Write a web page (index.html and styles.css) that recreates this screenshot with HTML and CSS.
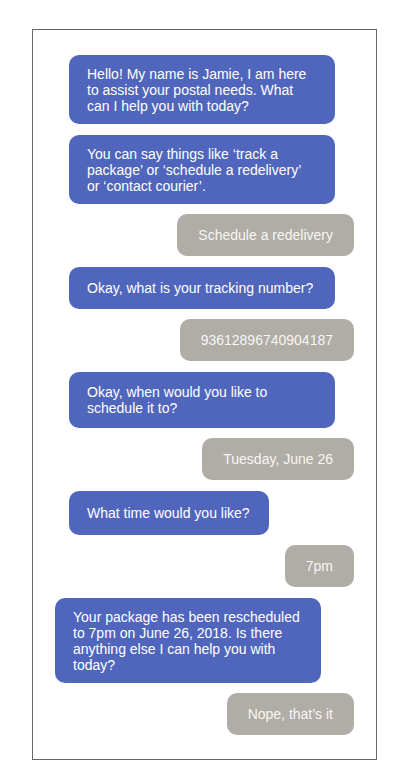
FILE: index.html
```html
<!DOCTYPE html>
<html lang="en">
<head>
<meta charset="utf-8">
<title>Chat</title>
<link rel="stylesheet" href="styles.css">
</head>
<body>
<main class="chat">
  <div class="msg bot multi">Hello! My name is Jamie, I am here to assist your postal needs. What can I help you with today?</div>
  <div class="msg bot multi">You can say things like ‘track a package’ or ‘schedule a redelivery’ or ‘contact courier’.</div>
  <div class="msg me">Schedule a redelivery</div>
  <div class="msg bot">Okay, what is your tracking number?</div>
  <div class="msg me">93612896740904187</div>
  <div class="msg bot two">Okay, when would you like to schedule it to?</div>
  <div class="msg me">Tuesday, June 26</div>
  <div class="msg bot fit tall">What time would you like?</div>
  <div class="msg me">7pm</div>
  <div class="msg bot multi flush">Your package has been rescheduled to 7pm on June 26, 2018. Is there anything else I can help you with today?</div>
  <div class="msg me">Nope, that’s it</div>
</main>
</body>
</html>
```
FILE: styles.css
```css
html, body {
  margin: 0;
  padding: 0;
  background: #ffffff;
}

.chat {
  box-sizing: border-box;
  width: 345px;
  height: 731px;
  margin: 29px 0 0 32px;
  border: 1px solid #666666;
  padding: 25px 22px 0;
  display: flex;
  flex-direction: column;
  gap: 10.5px;
}

.msg {
  box-sizing: border-box;
  font-family: "Liberation Sans", Arial, Helvetica, sans-serif;
  font-size: 14px;
  line-height: 16px;
  border-radius: 10px;
}

.bot {
  align-self: flex-start;
  width: 266px;
  margin-left: 14px;
  padding: 13px 19px 13px 18px;
  background: #5066bc;
  color: #ffffff;
}

.bot.fit {
  width: auto;
}

.bot.tall {
  padding-top: 14px;
  padding-bottom: 14px;
}

.bot.multi {
  padding-top: 11px;
  padding-bottom: 10px;
}

.bot.two {
  padding-top: 12px;
  padding-bottom: 12px;
}

.bot.flush {
  margin-left: 0;
}

.me {
  align-self: flex-end;
  padding: 13px 21px;
  background: #b0aca6;
  color: #f7f6f4;
  white-space: nowrap;
}
```
